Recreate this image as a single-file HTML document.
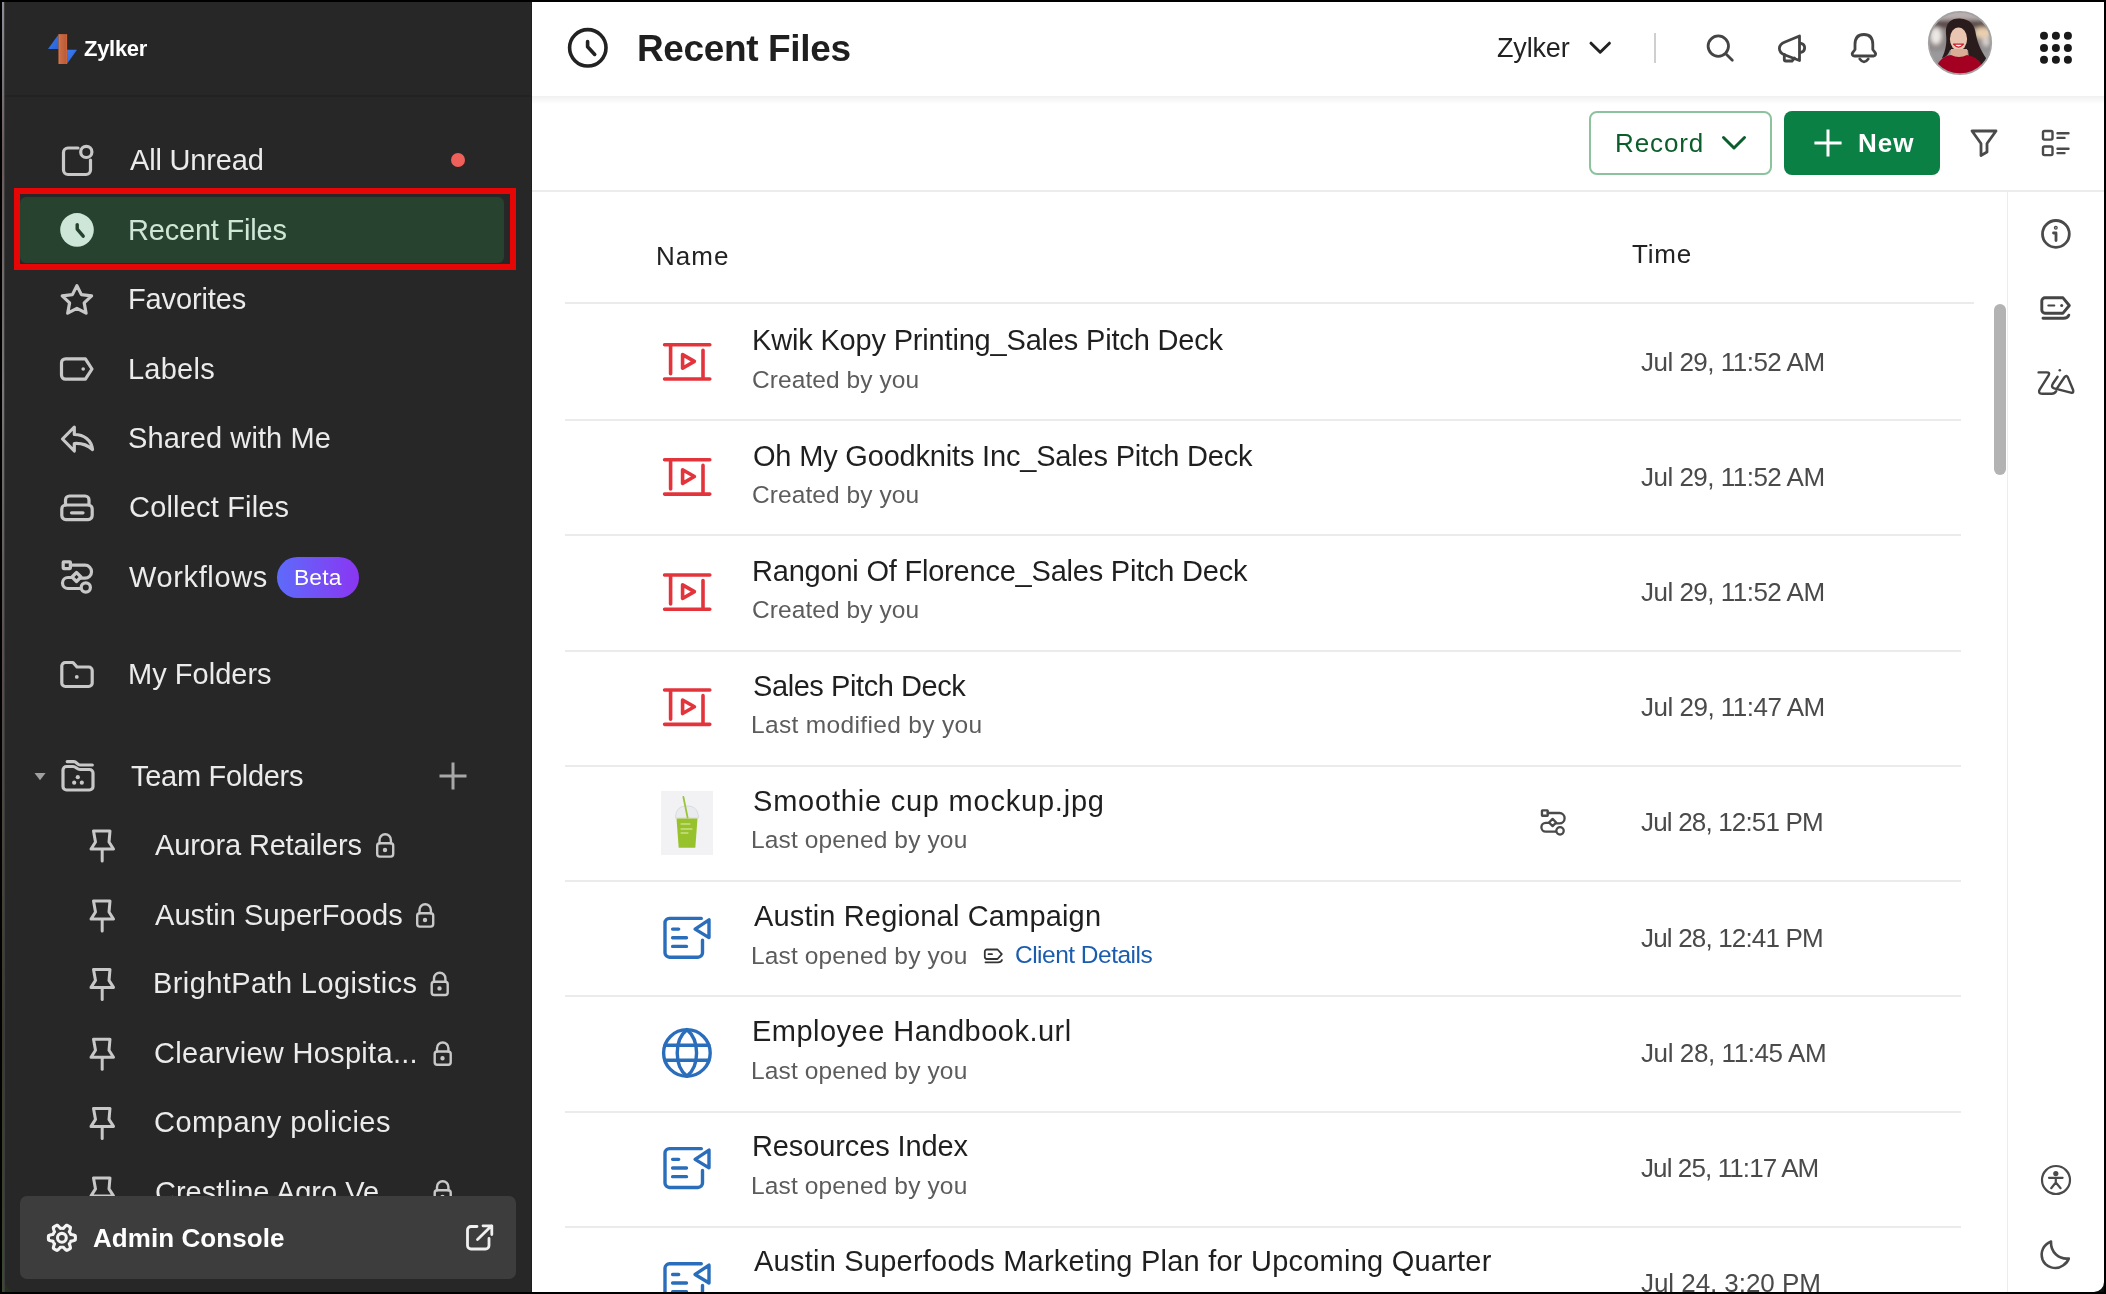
<!DOCTYPE html><html><head><meta charset="utf-8"><style>
*{margin:0;padding:0;box-sizing:border-box}
html,body{width:2106px;height:1294px;overflow:hidden;background:#000}
body{position:relative;font-family:"Liberation Sans",sans-serif}
.t{position:absolute;white-space:nowrap;line-height:1;will-change:transform}
.a{position:absolute}
svg{position:absolute;overflow:visible}
</style></head><body>
<div class="a" style="left:2px;top:2px;width:2px;height:1290px;background:linear-gradient(180deg,#8a8f9a 0%,#6a5a5a 12%,#7a7878 30%,#5a5050 50%,#3a3a2a 80%,#3a4a30 100%);"></div>
<div class="a" style="left:5px;top:2px;width:2099px;height:1290px;background:#fff;"></div>
<div class="a" style="left:5px;top:2px;width:527px;height:1290px;background:#272727;"></div>
<div class="a" style="left:4px;top:2px;width:1px;height:1290px;background:#3c3c3c;"></div>
<div class="a" style="left:531px;top:2px;width:1px;height:1290px;background:#1e1e1e;"></div>
<div class="a" style="left:5px;top:95px;width:526px;height:2px;background:#222;"></div>
<svg width="2106" height="1294" style="left:0;top:0;pointer-events:none" fill="none" stroke="none" stroke-width="3" stroke-linecap="round" stroke-linejoin="round" ><defs><linearGradient id="lgo" x1="0" y1="0" x2="1" y2="0"><stop offset="0" stop-color="#e8773e"/><stop offset="0.25" stop-color="#c86a44"/><stop offset="0.85" stop-color="#b85c3a"/><stop offset="1" stop-color="#e06a3a"/></linearGradient><linearGradient id="lgb" x1="0" y1="0" x2="1" y2="1"><stop offset="0" stop-color="#3a7cf2"/><stop offset="1" stop-color="#2a62d8"/></linearGradient></defs><path d="M48 49 L58.5 34.4 L58.5 49 Z" fill="url(#lgb)"/><path d="M67.1 49.8 L77 49.8 L67.1 63.7 Z" fill="url(#lgb)"/><rect x="58.5" y="34.1" width="8.6" height="29.9" fill="url(#lgo)"/></svg>
<div class="t" style="left:83.60px;top:37.97px;font-size:22px;color:#fff;font-weight:700;letter-spacing:-0.300px;">Zylker</div>
<div class="a" style="left:20.3px;top:196.9px;width:483.9px;height:66.20000000000002px;background:#27432f;border-radius:6px;"></div>
<div class="a" style="left:13.9px;top:187.7px;width:502.3px;height:82.4px;border:6.2px solid #e60606"></div>
<svg width="2106" height="1294" style="left:0;top:0;pointer-events:none" fill="none" stroke="none" stroke-width="3" stroke-linecap="round" stroke-linejoin="round" ><circle cx="77" cy="229.9" r="16.8" fill="#cde6d8" stroke="none"/><path d="M77.2 224.6 V229.1 L83.2 236.2" stroke="#27432f" stroke-width="3.4"/></svg>
<div class="t" id="t2" style="left:129.60px;top:145.55px;font-size:29px;color:#ebebeb;letter-spacing:-0.178px;">All Unread</div>
<div class="a" style="left:451px;top:153px;width:14px;height:14px;border-radius:50%;background:#f0605a"></div>
<div class="t" id="t3" style="left:128.10px;top:216.25px;font-size:29px;color:#cfe6d6;letter-spacing:-0.200px;">Recent Files</div>
<div class="t" id="t4" style="left:128.00px;top:285.35px;font-size:29px;color:#ebebeb;letter-spacing:-0.125px;">Favorites</div>
<div class="t" id="t5" style="left:128.00px;top:355.35px;font-size:29px;color:#ebebeb;letter-spacing:0.240px;">Labels</div>
<div class="t" id="t6" style="left:128.20px;top:424.25px;font-size:29px;color:#ebebeb;letter-spacing:0.108px;">Shared with Me</div>
<div class="t" id="t7" style="left:128.60px;top:492.95px;font-size:29px;color:#ebebeb;letter-spacing:0.183px;">Collect Files</div>
<div class="t" id="t8" style="left:129.20px;top:563.35px;font-size:29px;color:#ebebeb;letter-spacing:0.625px;">Workflows</div>
<div class="a" style="left:276.9px;top:557.2px;width:82.2px;height:40.6px;border-radius:20.3px;background:linear-gradient(90deg,#5d6bfa,#8a36f2)"></div>
<div class="t" style="left:293.80px;top:566.30px;font-size:22.8px;color:#fff;letter-spacing:0.150px;">Beta</div>
<div class="t" id="t10" style="left:127.60px;top:659.55px;font-size:29px;color:#ebebeb;letter-spacing:0.022px;">My Folders</div>
<div class="t" id="t11" style="left:130.60px;top:761.65px;font-size:29px;color:#ebebeb;letter-spacing:-0.291px;">Team Folders</div>
<div class="t" id="t12" style="left:154.70px;top:830.85px;font-size:29px;color:#ebebeb;letter-spacing:-0.173px;">Aurora Retailers</div>
<div class="t" id="t13" style="left:154.70px;top:900.85px;font-size:29px;color:#ebebeb;letter-spacing:0.063px;">Austin SuperFoods</div>
<div class="t" id="t14" style="left:152.70px;top:969.25px;font-size:29px;color:#ebebeb;letter-spacing:0.400px;">BrightPath Logistics</div>
<div class="t" id="t15" style="left:153.70px;top:1039.05px;font-size:29px;color:#ebebeb;letter-spacing:0.305px;">Clearview Hospita...</div>
<div class="t" id="t16" style="left:153.70px;top:1108.25px;font-size:29px;color:#ebebeb;letter-spacing:0.507px;">Company policies</div>
<div class="t" style="left:155.10px;top:1177.75px;font-size:29px;color:#ebebeb;">Crestline Agro Ve...</div>
<svg width="2106" height="1294" style="left:0;top:0;pointer-events:none" fill="none" stroke="#c8c8c8" stroke-width="3.2" stroke-linecap="round" stroke-linejoin="round" ><path d="M78 148 H68 a4.5 4.5 0 0 0 -4.5 4.5 V170 a4.5 4.5 0 0 0 4.5 4.5 H86 a4.5 4.5 0 0 0 4.5 -4.5 V160"/><circle cx="86.3" cy="151.9" r="5.6"/><path d="M76.9 285.6 L81.4 294.6 L91.6 295.9 L84.2 302.9 L86.1 313.2 L76.9 308.3 L67.7 313.2 L69.6 302.9 L62.2 295.9 L72.4 294.6 Z"/><path d="M65.5 358.8 H85.4 L92 369 L85.4 379.2 H65.5 a4 4 0 0 1 -4 -4 V362.8 a4 4 0 0 1 4 -4 Z"/><circle cx="83.2" cy="369" r="1.8" fill="#c8c8c8" stroke="none"/><path d="M74.3 427 L62.5 439 L74.3 451 V443.5 C82 443 88 445.5 92.5 449.5 C91.5 440 84 434.5 74.3 434.5 Z"/><path d="M65.5 505 V500 a4 4 0 0 1 4 -4 H85 a4 4 0 0 1 4 4 V505"/><rect x="61.8" y="505" width="30.4" height="14.6" rx="4"/><path d="M71.5 512.8 H83"/><rect x="63.2" y="561.8" width="7.2" height="6.8" rx="0.5"/><path d="M70.4 565.2 H85 a6.5 6.5 0 0 1 0 13 H80"/><path d="M76.5 572.5 L81 577 L76.5 581.5 L72 577 Z"/><path d="M72 577.5 H68 a5.5 5.5 0 0 0 0 11 H80.5"/><circle cx="85.8" cy="587.5" r="4.6"/><path d="M61.8 666 a3.5 3.5 0 0 1 3.5 -3.5 H73 L77 667 H88.7 a3.5 3.5 0 0 1 3.5 3.5 V683 a3.5 3.5 0 0 1 -3.5 3.5 H65.3 a3.5 3.5 0 0 1 -3.5 -3.5 Z"/><circle cx="76.8" cy="676.9" r="1.9" fill="#c8c8c8" stroke="none"/><path d="M67.2 761.6 H74 C76.5 761.6 77.5 765 80 765 H92.3"/><path d="M63 770 a3.5 3.5 0 0 1 3.5 -3.5 H73 C76 766.5 77 769.5 80 769.5 H89.5 a3.5 3.5 0 0 1 3.5 3.5 V786.5 a3.5 3.5 0 0 1 -3.5 3.5 H66.5 a3.5 3.5 0 0 1 -3.5 -3.5 Z"/><circle cx="77.8" cy="777.2" r="2.1" fill="#c8c8c8" stroke="none"/><circle cx="74.2" cy="782.7" r="2.1" fill="#c8c8c8" stroke="none"/><circle cx="81.8" cy="782.7" r="2.1" fill="#c8c8c8" stroke="none"/></svg>
<svg width="2106" height="1294" style="left:0;top:0;pointer-events:none" fill="#a0a0a0" stroke="none" stroke-width="3" stroke-linecap="round" stroke-linejoin="round" ><path d="M34.5 773.1 H45.6 L40 780.2 Z"/></svg>
<svg width="2106" height="1294" style="left:0;top:0;pointer-events:none" fill="none" stroke="#a8a8a8" stroke-width="3" stroke-linejoin="round" stroke-linecap="butt"><path d="M439.5 776.1 H466.5 M453 762.6 V789.6"/></svg>
<svg width="2106" height="1294" style="left:0;top:0;pointer-events:none" fill="none" stroke="#c8c8c8" stroke-width="3" stroke-linecap="round" stroke-linejoin="round" ><g transform="translate(0 0.0)"><path d="M93.5 831 H110 L109 842 L113.5 849 H91 L95.5 842 Z"/><path d="M102.2 850 V861"/></g><g transform="translate(0 70.0)"><path d="M93.5 831 H110 L109 842 L113.5 849 H91 L95.5 842 Z"/><path d="M102.2 850 V861"/></g><g transform="translate(0 138.4)"><path d="M93.5 831 H110 L109 842 L113.5 849 H91 L95.5 842 Z"/><path d="M102.2 850 V861"/></g><g transform="translate(0 208.2)"><path d="M93.5 831 H110 L109 842 L113.5 849 H91 L95.5 842 Z"/><path d="M102.2 850 V861"/></g><g transform="translate(0 277.4)"><path d="M93.5 831 H110 L109 842 L113.5 849 H91 L95.5 842 Z"/><path d="M102.2 850 V861"/></g><g transform="translate(0 346.9)"><path d="M93.5 831 H110 L109 842 L113.5 849 H91 L95.5 842 Z"/><path d="M102.2 850 V861"/></g></svg>
<svg width="2106" height="1294" style="left:0;top:0;pointer-events:none" fill="none" stroke="#c8c8c8" stroke-width="2.4" stroke-linecap="round" stroke-linejoin="round" ><g transform="translate(0.0 0.0)"><rect x="377.2" y="843.3" width="16" height="13.3" rx="2.5"/><path d="M379.5 843.3 V840 a5.7 5.7 0 0 1 11.4 0 V843.3"/><circle cx="385" cy="850" r="1" fill="#c8c8c8"/></g><g transform="translate(40.0 70.0)"><rect x="377.2" y="843.3" width="16" height="13.3" rx="2.5"/><path d="M379.5 843.3 V840 a5.7 5.7 0 0 1 11.4 0 V843.3"/><circle cx="385" cy="850" r="1" fill="#c8c8c8"/></g><g transform="translate(54.5 138.4)"><rect x="377.2" y="843.3" width="16" height="13.3" rx="2.5"/><path d="M379.5 843.3 V840 a5.7 5.7 0 0 1 11.4 0 V843.3"/><circle cx="385" cy="850" r="1" fill="#c8c8c8"/></g><g transform="translate(57.5 208.2)"><rect x="377.2" y="843.3" width="16" height="13.3" rx="2.5"/><path d="M379.5 843.3 V840 a5.7 5.7 0 0 1 11.4 0 V843.3"/><circle cx="385" cy="850" r="1" fill="#c8c8c8"/></g><g transform="translate(57.5 346.9)"><rect x="377.2" y="843.3" width="16" height="13.3" rx="2.5"/><path d="M379.5 843.3 V840 a5.7 5.7 0 0 1 11.4 0 V843.3"/><circle cx="385" cy="850" r="1" fill="#c8c8c8"/></g></svg>
<div class="a" style="left:19.8px;top:1195.9px;width:495.99999999999994px;height:83.59999999999991px;background:#3d3d3d;border-radius:7px;"></div>
<div class="t" id="t18" style="left:92.50px;top:1224.79px;font-size:26px;color:#fff;font-weight:700;letter-spacing:0.067px;">Admin Console</div>
<svg width="2106" height="1294" style="left:0;top:0;pointer-events:none" fill="none" stroke="#f4f4f4" stroke-width="3.1" stroke-linecap="round" stroke-linejoin="round" ><path d="M75.40 1237.80 L75.40 1238.04 L75.39 1238.27 L75.38 1238.51 L75.37 1238.74 L75.35 1238.98 L75.33 1239.21 L75.30 1239.45 L75.27 1239.68 L75.23 1239.91 L75.00 1240.11 L74.63 1240.27 L74.24 1240.42 L73.83 1240.56 L73.42 1240.67 L73.01 1240.78 L72.59 1240.87 L72.18 1240.94 L71.78 1241.01 L71.39 1241.07 L71.02 1241.12 L70.77 1241.20 L70.71 1241.36 L70.64 1241.51 L70.58 1241.66 L70.51 1241.81 L70.44 1241.96 L70.36 1242.11 L70.29 1242.26 L70.21 1242.41 L70.13 1242.55 L70.04 1242.69 L69.96 1242.83 L69.87 1242.97 L69.78 1243.11 L69.68 1243.25 L69.59 1243.38 L69.49 1243.52 L69.39 1243.65 L69.28 1243.78 L69.33 1244.04 L69.47 1244.38 L69.62 1244.75 L69.76 1245.13 L69.90 1245.53 L70.03 1245.93 L70.15 1246.34 L70.25 1246.76 L70.34 1247.17 L70.41 1247.58 L70.45 1247.99 L70.40 1248.29 L70.21 1248.44 L70.02 1248.58 L69.84 1248.72 L69.64 1248.86 L69.45 1248.99 L69.25 1249.12 L69.05 1249.25 L68.85 1249.37 L68.65 1249.49 L68.44 1249.61 L68.24 1249.72 L68.03 1249.83 L67.82 1249.93 L67.61 1250.04 L67.39 1250.13 L67.17 1250.23 L66.96 1250.32 L66.74 1250.40 L66.45 1250.30 L66.12 1250.06 L65.80 1249.80 L65.48 1249.51 L65.17 1249.22 L64.88 1248.91 L64.59 1248.59 L64.32 1248.28 L64.06 1247.96 L63.81 1247.65 L63.58 1247.35 L63.39 1247.18 L63.22 1247.21 L63.06 1247.23 L62.89 1247.25 L62.73 1247.26 L62.56 1247.28 L62.40 1247.29 L62.23 1247.29 L62.07 1247.30 L61.90 1247.30 L61.73 1247.30 L61.57 1247.29 L61.40 1247.29 L61.24 1247.28 L61.07 1247.26 L60.91 1247.25 L60.74 1247.23 L60.58 1247.21 L60.41 1247.18 L60.22 1247.35 L59.99 1247.65 L59.74 1247.96 L59.48 1248.28 L59.21 1248.59 L58.92 1248.91 L58.63 1249.22 L58.32 1249.51 L58.00 1249.80 L57.68 1250.06 L57.35 1250.30 L57.06 1250.40 L56.84 1250.32 L56.63 1250.23 L56.41 1250.13 L56.19 1250.04 L55.98 1249.93 L55.77 1249.83 L55.56 1249.72 L55.36 1249.61 L55.15 1249.49 L54.95 1249.37 L54.75 1249.25 L54.55 1249.12 L54.35 1248.99 L54.16 1248.86 L53.96 1248.72 L53.78 1248.58 L53.59 1248.44 L53.40 1248.29 L53.35 1247.99 L53.39 1247.58 L53.46 1247.17 L53.55 1246.76 L53.65 1246.34 L53.77 1245.93 L53.90 1245.53 L54.04 1245.13 L54.18 1244.75 L54.33 1244.38 L54.47 1244.04 L54.52 1243.78 L54.41 1243.65 L54.31 1243.52 L54.21 1243.38 L54.12 1243.25 L54.02 1243.11 L53.93 1242.97 L53.84 1242.83 L53.76 1242.69 L53.67 1242.55 L53.59 1242.41 L53.51 1242.26 L53.44 1242.11 L53.36 1241.96 L53.29 1241.81 L53.22 1241.66 L53.16 1241.51 L53.09 1241.36 L53.03 1241.20 L52.78 1241.12 L52.41 1241.07 L52.02 1241.01 L51.62 1240.94 L51.21 1240.87 L50.79 1240.78 L50.38 1240.67 L49.97 1240.56 L49.56 1240.42 L49.17 1240.27 L48.80 1240.11 L48.57 1239.91 L48.53 1239.68 L48.50 1239.45 L48.47 1239.21 L48.45 1238.98 L48.43 1238.74 L48.42 1238.51 L48.41 1238.27 L48.40 1238.04 L48.40 1237.80 L48.40 1237.56 L48.41 1237.33 L48.42 1237.09 L48.43 1236.86 L48.45 1236.62 L48.47 1236.39 L48.50 1236.15 L48.53 1235.92 L48.57 1235.69 L48.80 1235.49 L49.17 1235.33 L49.56 1235.18 L49.97 1235.04 L50.38 1234.93 L50.79 1234.82 L51.21 1234.73 L51.62 1234.66 L52.02 1234.59 L52.41 1234.53 L52.78 1234.48 L53.03 1234.40 L53.09 1234.24 L53.16 1234.09 L53.22 1233.94 L53.29 1233.79 L53.36 1233.64 L53.44 1233.49 L53.51 1233.34 L53.59 1233.19 L53.67 1233.05 L53.76 1232.91 L53.84 1232.77 L53.93 1232.63 L54.02 1232.49 L54.12 1232.35 L54.21 1232.22 L54.31 1232.08 L54.41 1231.95 L54.52 1231.82 L54.47 1231.56 L54.33 1231.22 L54.18 1230.85 L54.04 1230.47 L53.90 1230.07 L53.77 1229.67 L53.65 1229.26 L53.55 1228.84 L53.46 1228.43 L53.39 1228.02 L53.35 1227.61 L53.40 1227.31 L53.59 1227.16 L53.78 1227.02 L53.96 1226.88 L54.16 1226.74 L54.35 1226.61 L54.55 1226.48 L54.75 1226.35 L54.95 1226.23 L55.15 1226.11 L55.36 1225.99 L55.56 1225.88 L55.77 1225.77 L55.98 1225.67 L56.19 1225.56 L56.41 1225.47 L56.63 1225.37 L56.84 1225.28 L57.06 1225.20 L57.35 1225.30 L57.68 1225.54 L58.00 1225.80 L58.32 1226.09 L58.63 1226.38 L58.92 1226.69 L59.21 1227.01 L59.48 1227.32 L59.74 1227.64 L59.99 1227.95 L60.22 1228.25 L60.41 1228.42 L60.58 1228.39 L60.74 1228.37 L60.91 1228.35 L61.07 1228.34 L61.24 1228.32 L61.40 1228.31 L61.57 1228.31 L61.73 1228.30 L61.90 1228.30 L62.07 1228.30 L62.23 1228.31 L62.40 1228.31 L62.56 1228.32 L62.73 1228.34 L62.89 1228.35 L63.06 1228.37 L63.22 1228.39 L63.39 1228.42 L63.58 1228.25 L63.81 1227.95 L64.06 1227.64 L64.32 1227.32 L64.59 1227.01 L64.88 1226.69 L65.17 1226.38 L65.48 1226.09 L65.80 1225.80 L66.12 1225.54 L66.45 1225.30 L66.74 1225.20 L66.96 1225.28 L67.17 1225.37 L67.39 1225.47 L67.61 1225.56 L67.82 1225.67 L68.03 1225.77 L68.24 1225.88 L68.44 1225.99 L68.65 1226.11 L68.85 1226.23 L69.05 1226.35 L69.25 1226.48 L69.45 1226.61 L69.64 1226.74 L69.84 1226.88 L70.02 1227.02 L70.21 1227.16 L70.40 1227.31 L70.45 1227.61 L70.41 1228.02 L70.34 1228.43 L70.25 1228.84 L70.15 1229.26 L70.03 1229.67 L69.90 1230.07 L69.76 1230.47 L69.62 1230.85 L69.47 1231.22 L69.33 1231.56 L69.28 1231.82 L69.39 1231.95 L69.49 1232.08 L69.59 1232.22 L69.68 1232.35 L69.78 1232.49 L69.87 1232.63 L69.96 1232.77 L70.04 1232.91 L70.13 1233.05 L70.21 1233.19 L70.29 1233.34 L70.36 1233.49 L70.44 1233.64 L70.51 1233.79 L70.58 1233.94 L70.64 1234.09 L70.71 1234.24 L70.77 1234.40 L71.02 1234.48 L71.39 1234.53 L71.78 1234.59 L72.18 1234.66 L72.59 1234.73 L73.01 1234.82 L73.42 1234.93 L73.83 1235.04 L74.24 1235.18 L74.63 1235.33 L75.00 1235.49 L75.23 1235.69 L75.27 1235.92 L75.30 1236.15 L75.33 1236.39 L75.35 1236.62 L75.37 1236.86 L75.38 1237.09 L75.39 1237.33 L75.40 1237.56 Z"/><circle cx="61.9" cy="1237.8" r="4.4"/></svg>
<svg width="2106" height="1294" style="left:0;top:0;pointer-events:none" fill="none" stroke="#f0f0f0" stroke-width="2.8" stroke-linecap="round" stroke-linejoin="round" ><path d="M477 1226.5 H471 a3.5 3.5 0 0 0 -3.5 3.5 V1245.5 a3.5 3.5 0 0 0 3.5 3.5 H485.5 a3.5 3.5 0 0 0 3.5 -3.5 V1238.5"/><path d="M477.5 1239.5 L491.5 1225.8 M483 1225.8 H491.8 V1234.5"/></svg>
<div class="a" style="left:532px;top:96px;width:1572px;height:8px;background:linear-gradient(180deg,rgba(0,0,0,0.06),rgba(0,0,0,0));"></div>
<svg width="2106" height="1294" style="left:0;top:0;pointer-events:none" fill="none" stroke="#222" stroke-width="3.6" stroke-linecap="round" stroke-linejoin="round" ><circle cx="587.8" cy="47.8" r="18.2"/><path d="M587.6 41.5 V46.8 L594.7 54.4"/></svg>
<div class="t" id="t19" style="left:636.50px;top:29.77px;font-size:37px;color:#1f1f1f;font-weight:700;letter-spacing:-0.364px;">Recent Files</div>
<div class="t" id="t20" style="left:1496.70px;top:34.74px;font-size:27px;color:#222;letter-spacing:-0.160px;">Zylker</div>
<svg width="2106" height="1294" style="left:0;top:0;pointer-events:none" fill="none" stroke="#222" stroke-width="3" stroke-linecap="round" stroke-linejoin="round" ><path d="M1591 43.2 L1600.2 52.2 L1609.4 43.2"/></svg>
<div class="a" style="left:1654px;top:33px;width:2px;height:30px;background:#cfcfcf;"></div>
<svg width="2106" height="1294" style="left:0;top:0;pointer-events:none" fill="none" stroke="#444" stroke-width="2.8" stroke-linecap="round" stroke-linejoin="round" ><circle cx="1718.3" cy="46.1" r="10.2"/><path d="M1726 54 L1732.3 60.3"/></svg>
<svg width="2106" height="1294" style="left:0;top:0;pointer-events:none" fill="none" stroke="#444" stroke-width="2.8" stroke-linecap="round" stroke-linejoin="round" ><path d="M1799.5 36 L1785 42 C1777.5 45 1777.5 52 1785 55 L1799.5 60.5 Z"/><path d="M1801 43.3 A4.6 4.6 0 0 1 1801 52.3"/><path d="M1784.3 54.5 V59.5 a1.5 1.5 0 0 0 1.5 1.5 H1792 L1794.5 58"/></svg>
<svg width="2106" height="1294" style="left:0;top:0;pointer-events:none" fill="none" stroke="#444" stroke-width="2.8" stroke-linecap="round" stroke-linejoin="round" ><path d="M1863.9 34.5 C1857.5 34.5 1855 39 1855 44.5 V49.5 L1852.8 52.5 C1851.5 54 1852.3 56 1854.3 56 H1873.5 C1875.5 56 1876.3 54 1875 52.5 L1872.8 49.5 V44.5 C1872.8 39 1870.3 34.5 1863.9 34.5 Z"/><path d="M1859.8 59 Q1864 64.8 1868.2 59"/></svg>
<svg width="2106" height="1294" style="left:0;top:0;pointer-events:none" fill="none" stroke="none" stroke-width="3" stroke-linecap="round" stroke-linejoin="round" ><defs><clipPath id="avc"><circle cx="1960" cy="43" r="31.2"/></clipPath><filter id="blur2"><feGaussianBlur stdDeviation="2.2"/></filter><filter id="blur1"><feGaussianBlur stdDeviation="0.7"/></filter></defs><g clip-path="url(#avc)"><rect x="1925" y="8" width="70" height="70" fill="#8d8686"/><g filter="url(#blur2)"><rect x="1925" y="8" width="70" height="12" fill="#b9aeae"/><rect x="1925" y="20" width="70" height="8" fill="#5a4a48"/><ellipse cx="1936" cy="36" rx="6" ry="9" fill="#ece8e4"/><ellipse cx="1983" cy="33" rx="9" ry="6" fill="#e8cfae"/><ellipse cx="1986" cy="42" rx="4" ry="5" fill="#d8d4d2"/><rect x="1925" y="50" width="70" height="12" fill="#9a9a9c"/></g><g filter="url(#blur1)"><path d="M1946 34 C1945 22 1952 18 1960 18.5 C1970 19 1975 25 1976 35 C1978 45 1982 52 1986 58 L1984 70 L1970 66 L1968 50 L1950 50 C1948 56 1944 58 1942 58 C1946 50 1947 42 1946 34 Z" fill="#2a1c1a"/><ellipse cx="1958.5" cy="39" rx="8.6" ry="11.5" fill="#eac6b2"/><path d="M1951 49 L1967 49 L1968 58 L1950 58 Z" fill="#d9ad96"/><path d="M1953.5 44.2 Q1958.5 50 1963.5 44.2 Z" fill="#fff" stroke="#c41a2a" stroke-width="1.2"/><path d="M1934 80 C1935 62 1943 56 1951 55 Q1959 59 1967 55 C1977 57 1985 63 1986 80 Z" fill="#a30320"/></g></g><circle cx="1960" cy="43" r="31.2" fill="none" stroke="#a3a3a3" stroke-width="1.8"/></svg>
<svg width="2106" height="1294" style="left:0;top:0;pointer-events:none" fill="#1a1a1a" stroke="none" stroke-width="3" stroke-linecap="round" stroke-linejoin="round" ><circle cx="2044" cy="35.8" r="4"/><circle cx="2044" cy="47.9" r="4"/><circle cx="2044" cy="59.8" r="4"/><circle cx="2055.9" cy="35.8" r="4"/><circle cx="2055.9" cy="47.9" r="4"/><circle cx="2055.9" cy="59.8" r="4"/><circle cx="2067.9" cy="35.8" r="4"/><circle cx="2067.9" cy="47.9" r="4"/><circle cx="2067.9" cy="59.8" r="4"/></svg>
<div class="a" style="left:1589.2px;top:111px;width:182.5px;height:63.7px;border:2px solid #8cc39d;border-radius:8px;background:#fff"></div>
<div class="t" id="t21" style="left:1614.70px;top:129.69px;font-size:26px;color:#0b5e2b;letter-spacing:0.880px;">Record</div>
<svg width="2106" height="1294" style="left:0;top:0;pointer-events:none" fill="none" stroke="#0b5e2b" stroke-width="3" stroke-linecap="round" stroke-linejoin="round" ><path d="M1723.5 137.5 L1734 148 L1744.5 137.5"/></svg>
<div class="a" style="left:1783.9px;top:110.8px;width:156.29999999999995px;height:64.00000000000001px;background:#0a8044;border-radius:8px;"></div>
<svg width="2106" height="1294" style="left:0;top:0;pointer-events:none" fill="none" stroke="#fff" stroke-width="3" stroke-linejoin="round" stroke-linecap="butt"><path d="M1814.4 143 H1841.6 M1828 129.4 V156.5"/></svg>
<div class="t" id="t22" style="left:1858.30px;top:129.89px;font-size:26px;color:#fff;font-weight:700;letter-spacing:1.000px;">New</div>
<svg width="2106" height="1294" style="left:0;top:0;pointer-events:none" fill="none" stroke="#4a4a4a" stroke-width="2.8" stroke-linecap="round" stroke-linejoin="round" ><path d="M1972 131 H1996 L1987 143.5 V152 L1981 155.5 V143.5 Z"/></svg>
<svg width="2106" height="1294" style="left:0;top:0;pointer-events:none" fill="none" stroke="#4a4a4a" stroke-width="2.4" stroke-linecap="round" stroke-linejoin="round" ><rect x="2043" y="131" width="9.5" height="8.6" rx="1.5"/><rect x="2043" y="146.5" width="9.5" height="8.6" rx="1.5"/><path d="M2057.5 133.3 H2068.5 M2057.5 137.9 H2064.5 M2057.5 148.8 H2068.5 M2057.5 153.1 H2064.5"/></svg>
<div class="a" style="left:532px;top:190px;width:1572px;height:2px;background:#ececec;"></div>
<div class="a" style="left:2006.5px;top:192px;width:1.0px;height:1100px;background:#ededed;"></div>
<svg width="2106" height="1294" style="left:0;top:0;pointer-events:none" fill="none" stroke="#4a4a4a" stroke-width="2.8" stroke-linecap="round" stroke-linejoin="round" ><circle cx="2055.9" cy="233.9" r="13.4"/><path d="M2053.5 233 H2056 V240.5"/><circle cx="2055.8" cy="227.8" r="0.6" fill="#4a4a4a"/></svg>
<svg width="2106" height="1294" style="left:0;top:0;pointer-events:none" fill="none" stroke="#454545" stroke-width="2.9" stroke-linecap="round" stroke-linejoin="round" ><path d="M2045 297.8 H2063 L2069.3 305.5 L2063 313.2 H2045 a3.2 3.2 0 0 1 -3.2 -3.2 V301 a3.2 3.2 0 0 1 3.2 -3.2 Z"/><path d="M2043 318.2 H2063.5 C2066 318.2 2068 317.2 2068.8 315.2"/></svg>
<svg width="2106" height="1294" style="left:0;top:0;pointer-events:none" fill="none" stroke="#454545" stroke-width="2" stroke-linecap="round" stroke-linejoin="round" ><path d="M2048.3 305.4 H2054.3"/><circle cx="2061.7" cy="305.6" r="1.5" fill="#454545" stroke="none"/></svg>
<svg width="2106" height="1294" style="left:0;top:0;pointer-events:none" fill="none" stroke="#454545" stroke-width="2.4" stroke-linecap="round" stroke-linejoin="round" ><path d="M2038.6 372.4 H2046.8 Q2050.3 372.4 2048.6 375.4 L2039.6 389.6 Q2037.6 393.6 2042.2 393.8 H2051.8 Q2054.6 393.8 2056.2 391.2"/><path d="M2057.6 376.8 L2052.8 383.8 Q2050.6 387.2 2054.2 388.4 L2070.8 392.6 Q2074.4 393.4 2073 389.8 L2068 377.6 Q2066.6 374.6 2064.6 377 L2057 388.4"/><circle cx="2059.8" cy="370.2" r="1.3" fill="#454545" stroke="none"/></svg>
<svg width="2106" height="1294" style="left:0;top:0;pointer-events:none" fill="none" stroke="#4a4a4a" stroke-width="2.2" stroke-linecap="round" stroke-linejoin="round" ><circle cx="2056" cy="1180" r="14"/><circle cx="2055.8" cy="1173.6" r="2.6" fill="#4a4a4a" stroke="none"/><path d="M2049 1177.8 H2062.6 M2055.8 1178 V1182.5 L2051.2 1188.2 M2055.8 1182.5 L2060.6 1188.2"/></svg>
<svg width="2106" height="1294" style="left:0;top:0;pointer-events:none" fill="none" stroke="#4a4a4a" stroke-width="2.6" stroke-linecap="round" stroke-linejoin="round" ><path d="M2051 1241.5 C2043.5 1244.5 2040 1252 2042.5 1259.5 C2045.5 1267.5 2056 1270.5 2063 1265.5 C2066 1263.5 2068 1261 2068.8 1258.5 C2059 1259.5 2050.5 1252.5 2051 1241.5 Z"/></svg>
<div class="t" id="t23" style="left:656.00px;top:242.99px;font-size:26px;color:#222;letter-spacing:1.000px;">Name</div>
<div class="t" id="t24" style="left:1631.80px;top:240.79px;font-size:26px;color:#222;letter-spacing:0.767px;">Time</div>
<div class="a" style="left:565px;top:302px;width:1409px;height:2px;background:#ebebeb;"></div>
<div class="a" style="left:1994px;top:303.6px;width:11.5px;height:171.39999999999998px;background:#b3b3b3;border-radius:6px;"></div>
<div class="t" id="t25" style="left:752.20px;top:326.45px;font-size:29px;color:#1f1f1f;letter-spacing:-0.179px;">Kwik Kopy Printing_Sales Pitch Deck</div>
<div class="t" id="t26" style="left:752.20px;top:367.96px;font-size:24.5px;color:#5c5c5c;letter-spacing:0.077px;">Created by you</div>
<div class="t" id="t27" style="left:1641.00px;top:348.99px;font-size:26px;color:#4a4a4a;letter-spacing:-0.513px;">Jul 29, 11:52 AM</div>
<div class="a" style="left:565px;top:419px;width:1396px;height:2px;background:#ebebeb;"></div>
<div class="t" id="t28" style="left:753.20px;top:441.57px;font-size:29px;color:#1f1f1f;letter-spacing:-0.187px;">Oh My Goodknits Inc_Sales Pitch Deck</div>
<div class="t" id="t29" style="left:752.20px;top:483.08px;font-size:24.5px;color:#5c5c5c;letter-spacing:0.077px;">Created by you</div>
<div class="t" id="t30" style="left:1641.00px;top:464.11px;font-size:26px;color:#4a4a4a;letter-spacing:-0.513px;">Jul 29, 11:52 AM</div>
<div class="a" style="left:565px;top:534px;width:1396px;height:2px;background:#ebebeb;"></div>
<div class="t" id="t31" style="left:752.20px;top:556.69px;font-size:29px;color:#1f1f1f;letter-spacing:-0.210px;">Rangoni Of Florence_Sales Pitch Deck</div>
<div class="t" id="t32" style="left:752.20px;top:598.20px;font-size:24.5px;color:#5c5c5c;letter-spacing:0.077px;">Created by you</div>
<div class="t" id="t33" style="left:1641.00px;top:579.23px;font-size:26px;color:#4a4a4a;letter-spacing:-0.513px;">Jul 29, 11:52 AM</div>
<div class="a" style="left:565px;top:650px;width:1396px;height:2px;background:#ebebeb;"></div>
<div class="t" id="t34" style="left:753.20px;top:671.81px;font-size:29px;color:#1f1f1f;letter-spacing:-0.423px;">Sales Pitch Deck</div>
<div class="t" id="t35" style="left:751.20px;top:713.32px;font-size:24.5px;color:#5c5c5c;letter-spacing:0.337px;">Last modified by you</div>
<div class="t" id="t36" style="left:1641.00px;top:694.35px;font-size:26px;color:#4a4a4a;letter-spacing:-0.500px;">Jul 29, 11:47 AM</div>
<div class="a" style="left:565px;top:765px;width:1396px;height:2px;background:#ebebeb;"></div>
<div class="t" id="t37" style="left:753.20px;top:786.93px;font-size:29px;color:#1f1f1f;letter-spacing:0.786px;">Smoothie cup mockup.jpg</div>
<div class="t" id="t38" style="left:751.20px;top:828.44px;font-size:24.5px;color:#5c5c5c;letter-spacing:0.141px;">Last opened by you</div>
<div class="t" id="t39" style="left:1641.00px;top:809.47px;font-size:26px;color:#4a4a4a;letter-spacing:-0.833px;">Jul 28, 12:51 PM</div>
<div class="a" style="left:565px;top:880px;width:1396px;height:2px;background:#ebebeb;"></div>
<div class="t" id="t40" style="left:754.20px;top:902.05px;font-size:29px;color:#1f1f1f;letter-spacing:0.159px;">Austin Regional Campaign</div>
<div class="t" id="t41" style="left:751.20px;top:943.56px;font-size:24.5px;color:#5c5c5c;letter-spacing:0.141px;">Last opened by you</div>
<div class="t" id="t42" style="left:1641.00px;top:924.59px;font-size:26px;color:#4a4a4a;letter-spacing:-0.833px;">Jul 28, 12:41 PM</div>
<div class="a" style="left:565px;top:995px;width:1396px;height:2px;background:#ebebeb;"></div>
<div class="t" id="t43" style="left:752.20px;top:1017.17px;font-size:29px;color:#1f1f1f;letter-spacing:0.480px;">Employee Handbook.url</div>
<div class="t" id="t44" style="left:751.20px;top:1058.68px;font-size:24.5px;color:#5c5c5c;letter-spacing:0.141px;">Last opened by you</div>
<div class="t" id="t45" style="left:1641.00px;top:1039.71px;font-size:26px;color:#4a4a4a;letter-spacing:-0.407px;">Jul 28, 11:45 AM</div>
<div class="a" style="left:565px;top:1111px;width:1396px;height:2px;background:#ebebeb;"></div>
<div class="t" id="t46" style="left:752.20px;top:1132.29px;font-size:29px;color:#1f1f1f;letter-spacing:-0.121px;">Resources Index</div>
<div class="t" id="t47" style="left:751.20px;top:1173.80px;font-size:24.5px;color:#5c5c5c;letter-spacing:0.141px;">Last opened by you</div>
<div class="t" id="t48" style="left:1641.00px;top:1154.83px;font-size:26px;color:#4a4a4a;letter-spacing:-0.900px;">Jul 25, 11:17 AM</div>
<div class="a" style="left:565px;top:1226px;width:1396px;height:2px;background:#ebebeb;"></div>
<div class="t" id="t49" style="left:754.20px;top:1247.41px;font-size:29px;color:#1f1f1f;letter-spacing:0.231px;">Austin Superfoods Marketing Plan for Upcoming Quarter</div>
<div class="t" style="left:751.20px;top:1288.92px;font-size:24.5px;color:#5c5c5c;letter-spacing:0.141px;">Last opened by you</div>
<div class="t" id="t51" style="left:1641.00px;top:1269.95px;font-size:26px;color:#4a4a4a;letter-spacing:-0.057px;">Jul 24, 3:20 PM</div>
<svg width="2106" height="1294" style="left:0;top:0;pointer-events:none" fill="none" stroke="#e3343c" stroke-width="3.6" stroke-linecap="round" stroke-linejoin="round" ><g transform="translate(0 0.00)"><path d="M664.6 344.7 H709.8 M664.6 379 H709.8 M670.6 346.6 V373.8 M703 350.3 V376.9"/><path d="M682.6 354.6 L694.4 361.4 L682.6 368.2 Z"/></g><g transform="translate(0 115.12)"><path d="M664.6 344.7 H709.8 M664.6 379 H709.8 M670.6 346.6 V373.8 M703 350.3 V376.9"/><path d="M682.6 354.6 L694.4 361.4 L682.6 368.2 Z"/></g><g transform="translate(0 230.24)"><path d="M664.6 344.7 H709.8 M664.6 379 H709.8 M670.6 346.6 V373.8 M703 350.3 V376.9"/><path d="M682.6 354.6 L694.4 361.4 L682.6 368.2 Z"/></g><g transform="translate(0 345.36)"><path d="M664.6 344.7 H709.8 M664.6 379 H709.8 M670.6 346.6 V373.8 M703 350.3 V376.9"/><path d="M682.6 354.6 L694.4 361.4 L682.6 368.2 Z"/></g></svg>
<svg width="2106" height="1294" style="left:0;top:0;pointer-events:none" fill="none" stroke="#2a6ebb" stroke-width="3.4" stroke-linecap="round" stroke-linejoin="round" ><g transform="translate(0 0.00)"><path d="M701.3 918.4 H669.5 a4.5 4.5 0 0 0 -4.5 4.5 V952.7 a4.5 4.5 0 0 0 4.5 4.5 H698 a4.5 4.5 0 0 0 4.5 -4.5 V940.2"/><path d="M695.1 929.1 L709 919.8 V937.6 Z"/><path d="M672.6 929.1 H678.7 M672.6 937.7 H686.5 M672.6 946.4 H686.5"/></g><circle cx="686.9" cy="1052.9" r="23.3"/><path d="M665 1045.3 H709 M665 1060.3 H709"/><path d="M686.9 1029.6 C674 1040 674 1066 686.9 1076.2 C699.8 1066 699.8 1040 686.9 1029.6 Z"/><g transform="translate(0 230.24)"><path d="M701.3 918.4 H669.5 a4.5 4.5 0 0 0 -4.5 4.5 V952.7 a4.5 4.5 0 0 0 4.5 4.5 H698 a4.5 4.5 0 0 0 4.5 -4.5 V940.2"/><path d="M695.1 929.1 L709 919.8 V937.6 Z"/><path d="M672.6 929.1 H678.7 M672.6 937.7 H686.5 M672.6 946.4 H686.5"/></g><g transform="translate(0 345.36)"><path d="M701.3 918.4 H669.5 a4.5 4.5 0 0 0 -4.5 4.5 V952.7 a4.5 4.5 0 0 0 4.5 4.5 H698 a4.5 4.5 0 0 0 4.5 -4.5 V940.2"/><path d="M695.1 929.1 L709 919.8 V937.6 Z"/><path d="M672.6 929.1 H678.7 M672.6 937.7 H686.5 M672.6 946.4 H686.5"/></g></svg>
<div class="a" style="left:661.1px;top:790.8px;width:51.89999999999998px;height:64.30000000000007px;background:#f2f2f4;"></div>
<svg width="2106" height="1294" style="left:0;top:0;pointer-events:none" fill="none" stroke="none" stroke-width="3" stroke-linecap="round" stroke-linejoin="round" ><path d="M675.5 817.5 C676 809 680 806 687 806 C694 806 698 809 698.5 817.5 Z" fill="#e9ebee" stroke="#d0d4da" stroke-width="0.8"/><path d="M683.4 797 L687.6 817.6" stroke="#9cc43a" stroke-width="1.8"/><path d="M676.5 818.5 H697.5 L695.3 847.8 H678.7 Z" fill="#98c22c" stroke="none"/><path d="M681 824 H690 M681 829 H692 M681 833 H688" stroke="#dff0b0" stroke-width="1"/></svg>
<svg width="2106" height="1294" style="left:0;top:0;pointer-events:none" fill="none" stroke="#4a4a4a" stroke-width="2.9" stroke-linecap="round" stroke-linejoin="round" ><g transform="translate(1541 809.5) scale(0.8) translate(-62 -560.8)"><rect x="63.2" y="561.8" width="7.2" height="6.8" rx="0.5"/><path d="M70.4 565.2 H85 a6.5 6.5 0 0 1 0 13 H80"/><path d="M76.5 572.5 L81 577 L76.5 581.5 L72 577 Z"/><path d="M72 577.5 H68 a5.5 5.5 0 0 0 0 11 H80.5"/><circle cx="85.8" cy="587.5" r="4.6"/></g></svg>
<svg width="2106" height="1294" style="left:0;top:0;pointer-events:none" fill="none" stroke="#333" stroke-width="1.8" stroke-linecap="round" stroke-linejoin="round" ><path d="M987 949.5 H997.5 L1001.8 954.2 L997.5 959 H987 a2.2 2.2 0 0 1 -2.2 -2.2 V951.7 a2.2 2.2 0 0 1 2.2 -2.2 Z"/><path d="M988.5 954.2 H992"/><path d="M985.5 962.3 H998 C1000 962.3 1001.5 961.5 1002 960"/></svg>
<div class="t" id="t52" style="left:1014.90px;top:942.76px;font-size:24.5px;color:#1a5cb0;letter-spacing:-0.515px;">Client Details</div>
<div class="a" style="left:0px;top:1292px;width:2106px;height:2px;background:#000;"></div>
<div class="a" style="left:2104px;top:0px;width:2px;height:1294px;background:#000;"></div>
<div class="a" style="left:0px;top:0px;width:2106px;height:2px;background:#000;"></div>
<svg width="2106" height="1294" style="left:0;top:0;pointer-events:none" fill="none" stroke="none" stroke-width="3" stroke-linecap="round" stroke-linejoin="round" ><path d="M5 1280 V1292 H17 A12 12 0 0 1 5 1280 Z" fill="#26301e"/><path d="M2104 1282 V1292 H2094 A10 10 0 0 0 2104 1282 Z" fill="#07120a"/></svg>
</body></html>
